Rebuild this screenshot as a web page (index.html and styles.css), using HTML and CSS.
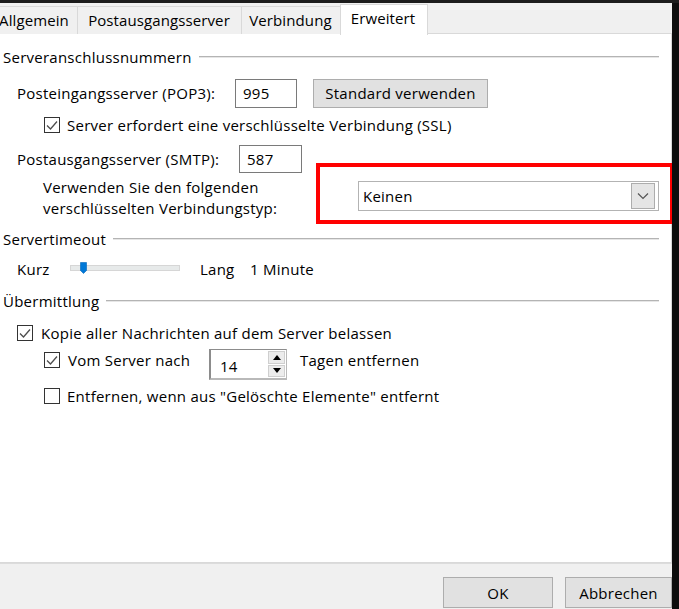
FILE: index.html
```html
<!DOCTYPE html>
<html lang="de">
<head>
<meta charset="utf-8">
<title>Erweitert</title>
<link rel="stylesheet" href="styles.css">
</head>
<body>
<div class="titlebar"></div>
<div class="dialog">
  <div class="tabs">
    <div class="tab tab-1">Allgemein</div>
    <div class="tab tab-2">Postausgangsserver</div>
    <div class="tab tab-3">Verbindung</div>
    <div class="tab tab-4 active">Erweitert</div>
  </div>
  <div class="panel">
    <div class="group-title h1">Serveranschlussnummern</div>

    <div class="row row-pop">
      <span class="lbl lbl-pop">Posteingangsserver (POP3):</span>
      <div class="textbox tb-pop">995</div>
      <div class="btn btn-std">Standard verwenden</div>
    </div>

    <div class="row row-ssl indent2">
      <span class="check checked"><svg viewBox="0 0 16 16" width="16" height="16"><polyline points="3,8.5 6.5,12 13,4.5" fill="none" stroke="#4d4d4d" stroke-width="1.3"/></svg></span>
      <span class="check-text">Server erfordert eine verschlüsselte Verbindung (SSL)</span>
    </div>

    <div class="row row-smtp">
      <span class="lbl lbl-smtp">Postausgangsserver (SMTP):</span>
      <div class="textbox tb-smtp">587</div>
    </div>

    <div class="row row-enc">
      <span class="lbl lbl-enc">Verwenden Sie den folgenden<br>verschlüsselten Verbindungstyp:</span>
      <div class="select">
        <span class="select-value">Keinen</span>
        <span class="select-btn"><svg viewBox="0 0 12 8" width="12" height="8"><polyline points="1,1.5 6,6.5 11,1.5" fill="none" stroke="#555" stroke-width="1.2"/></svg></span>
      </div>
    </div>

    <div class="group-title h2">Servertimeout</div>

    <div class="row row-slider">
      <span class="lbl lbl-kurz">Kurz</span>
      <div class="slider">
        <div class="track"></div>
        <svg class="thumb" viewBox="0 0 7 12" width="7" height="12"><path d="M0.5 0.5 H6.5 V8.5 L3.5 11.5 L0.5 8.5 Z" fill="#0078d7" stroke="#0066bb" stroke-width="0.6"/></svg>
      </div>
      <span class="lbl lbl-lang">Lang</span>
      <span class="lbl">1 Minute</span>
    </div>

    <div class="group-title h3">Übermittlung</div>

    <div class="row row-kopie indent1">
      <span class="check checked"><svg viewBox="0 0 16 16" width="16" height="16"><polyline points="3,8.5 6.5,12 13,4.5" fill="none" stroke="#4d4d4d" stroke-width="1.3"/></svg></span>
      <span class="check-text">Kopie aller Nachrichten auf dem Server belassen</span>
    </div>

    <div class="row row-vom indent2">
      <span class="check checked"><svg viewBox="0 0 16 16" width="16" height="16"><polyline points="3,8.5 6.5,12 13,4.5" fill="none" stroke="#4d4d4d" stroke-width="1.3"/></svg></span>
      <span class="check-text vom-text">Vom Server nach</span>
      <div class="spinner">
        <span class="spin-value">14</span>
        <span class="spin-btns">
          <span class="spin-btn"><svg viewBox="0 0 8 5" width="8" height="5"><path d="M0 5 L4 0 L8 5 Z" fill="#000"/></svg></span>
          <span class="spin-btn"><svg viewBox="0 0 8 5" width="8" height="5"><path d="M0 0 L4 5 L8 0 Z" fill="#000"/></svg></span>
        </span>
      </div>
      <span class="lbl lbl-tagen">Tagen entfernen</span>
    </div>

    <div class="row row-del indent2">
      <span class="check"></span>
      <span class="check-text">Entfernen, wenn aus "Gelöschte Elemente" entfernt</span>
    </div>

    <div class="highlight"></div>
  </div>
  <div class="footer">
    <div class="btn btn-ok">OK</div>
    <div class="btn btn-cancel">Abbrechen</div>
  </div>
</div>
</body>
</html>
```

FILE: styles.css
```css
html, body {
  margin: 0;
  padding: 0;
  height: 100%;
}
body {
  background: #0d0d0d;
  font-family: "Open Sans", "Noto Sans", sans-serif;
  font-size: 15px;
  letter-spacing: 0.25px;
  color: #000;
  overflow: hidden;
}
.titlebar {
  height: 3px;
  background: #1c1c1c;
}
.dialog {
  width: 672px;
  height: 606px;
  background: #f0f0f0;
  display: flex;
  flex-direction: column;
  overflow: hidden;
}
.tabs {
  display: flex;
  align-items: flex-end;
  height: 31px;
  margin-left: -9px;
  position: relative;
  z-index: 1;
}
.tab {
  height: 28px;
  box-sizing: border-box;
  padding: 0 1px 2px 0;
  border: 1px solid #d9d9d9;
  border-bottom: none;
  margin-right: -1px;
  display: flex;
  align-items: center;
  justify-content: center;
  background: #f0f0f0;
  white-space: nowrap;
  letter-spacing: 0.1px;
}
.tab-1 { width: 87px; }
.tab-2 { width: 165px; }
.tab-3 { width: 100px; }
.tab-4 { width: 88px; }
.tab.active {
  height: 31px;
  background: #fff;
  margin-bottom: -1px;
  padding: 0 2px 4px 0;
}
.panel {
  position: relative;
  height: 530px;
  box-sizing: border-box;
  margin-top: -1px;
  margin-left: -1px;
  border: 1px solid #d9d9d9;
  background: #fff;
  padding: 13px 12px 0 0;
}
.group-title {
  display: flex;
  align-items: center;
  height: 20px;
  padding-left: 3px;
  gap: 7px;
  white-space: nowrap;
}
.group-title::after {
  content: "";
  flex: 1;
  height: 1px;
  background: #b4b4b4;
  border-bottom: 1px solid #e6e6e6;
}
.h2 { margin-top: 10px; }
.h3 { margin-top: 12px; }

.row {
  display: flex;
  align-items: center;
  padding-left: 17px;
  white-space: nowrap;
}
.indent1 { padding-left: 17px; }
.indent2 { padding-left: 44px; }

.row-pop { margin-top: 11px; height: 30px; }
.row-ssl { margin-top: 8px; height: 18px; }
.row-smtp { margin-top: 10px; height: 29px; }
.row-enc { margin-top: 3px; height: 43px; padding-left: 43px; }
.row-slider { margin-top: 10px; height: 20px; }
.row-kopie { margin-top: 12px; height: 20px; }
.row-vom { margin-top: 6px; height: 31px; align-items: flex-start; }
.row-del { margin-top: 6px; height: 20px; }

.lbl-pop { width: 218px; }
.lbl-smtp { width: 222px; }
.lbl-enc { width: 316px; line-height: 21px; }
.lbl-kurz { width: 53px; }
.lbl-lang { width: 50px; margin-left: 20px; }
.lbl-tagen { margin-left: 13px; line-height: 22px; }

.textbox {
  box-sizing: border-box;
  border: 1px solid #7a7a7a;
  background: #fff;
  display: flex;
  align-items: center;
  padding-left: 7px;
}
.tb-pop { width: 62px; height: 29px; }
.tb-smtp { width: 63px; height: 28px; }

.btn {
  box-sizing: border-box;
  border: 1px solid #adadad;
  background: #e1e1e1;
  display: flex;
  align-items: center;
  justify-content: center;
}
.btn-std {
  width: 175px;
  height: 29px;
  margin-left: 16px;
}

.check {
  box-sizing: border-box;
  width: 16px;
  height: 16px;
  border: 1px solid #333;
  background: #fff;
  display: flex;
  align-items: center;
  justify-content: center;
  flex: none;
}
.check svg { display: block; margin: -1px; }
.check-text { margin-left: 7px; }
.row-kopie .check-text { margin-left: 8px; }
.row-vom .check { margin-top: 3px; }
.vom-text { margin-left: 8px; width: 141px; line-height: 22px; }

.select {
  box-sizing: border-box;
  align-self: flex-start;
  margin-top: 5px;
  width: 302px;
  height: 30px;
  border: 1px solid #b3b3b3;
  background: #fff;
  display: flex;
  align-items: center;
  justify-content: space-between;
  padding: 0 3px 0 3px;
}
.select-value { padding-left: 1px; }
.select-btn {
  box-sizing: border-box;
  width: 24px;
  height: 26px;
  border: 1px solid #adadad;
  background: #e5e5e5;
  display: flex;
  align-items: center;
  justify-content: center;
}

.slider {
  position: relative;
  width: 110px;
  height: 14px;
  margin-bottom: 2px;
}
.track {
  position: absolute;
  left: 0;
  right: 0;
  top: 4px;
  height: 4px;
  background: #e7eaea;
  border: 1px solid #d6d6d6;
}
.thumb {
  position: absolute;
  left: 10px;
  top: 1px;
}

.spinner {
  box-sizing: border-box;
  width: 78px;
  height: 31px;
  border-style: solid;
  border-width: 1px 1px 2px 2px;
  border-color: #8c8c8c #b9b9b9 #b9b9b9 #8c8c8c;
  background: #fff;
  display: flex;
  align-items: center;
  justify-content: space-between;
  padding: 1px 1px 1px 9px;
}
.spin-value { padding-top: 3px; }
.spin-btns {
  display: flex;
  flex-direction: column;
  gap: 1px;
  width: 17px;
  height: 26px;
}
.spin-btn {
  flex: 1;
  background: #ececec;
  border: 1px solid #cfcfcf;
  display: flex;
  align-items: center;
  justify-content: center;
}

.highlight {
  position: absolute;
  left: 316px;
  top: 129px;
  width: 358px;
  height: 61px;
  box-sizing: border-box;
  border: 4px solid #ff0000;
}

.footer {
  flex: 1;
  display: flex;
  justify-content: flex-end;
  align-items: flex-start;
  gap: 12px;
  padding-top: 13px;
  border-top: 1px solid #dcdcdc;
}
.btn-ok { width: 110px; height: 31px; }
.btn-cancel { width: 107px; height: 31px; }
```
